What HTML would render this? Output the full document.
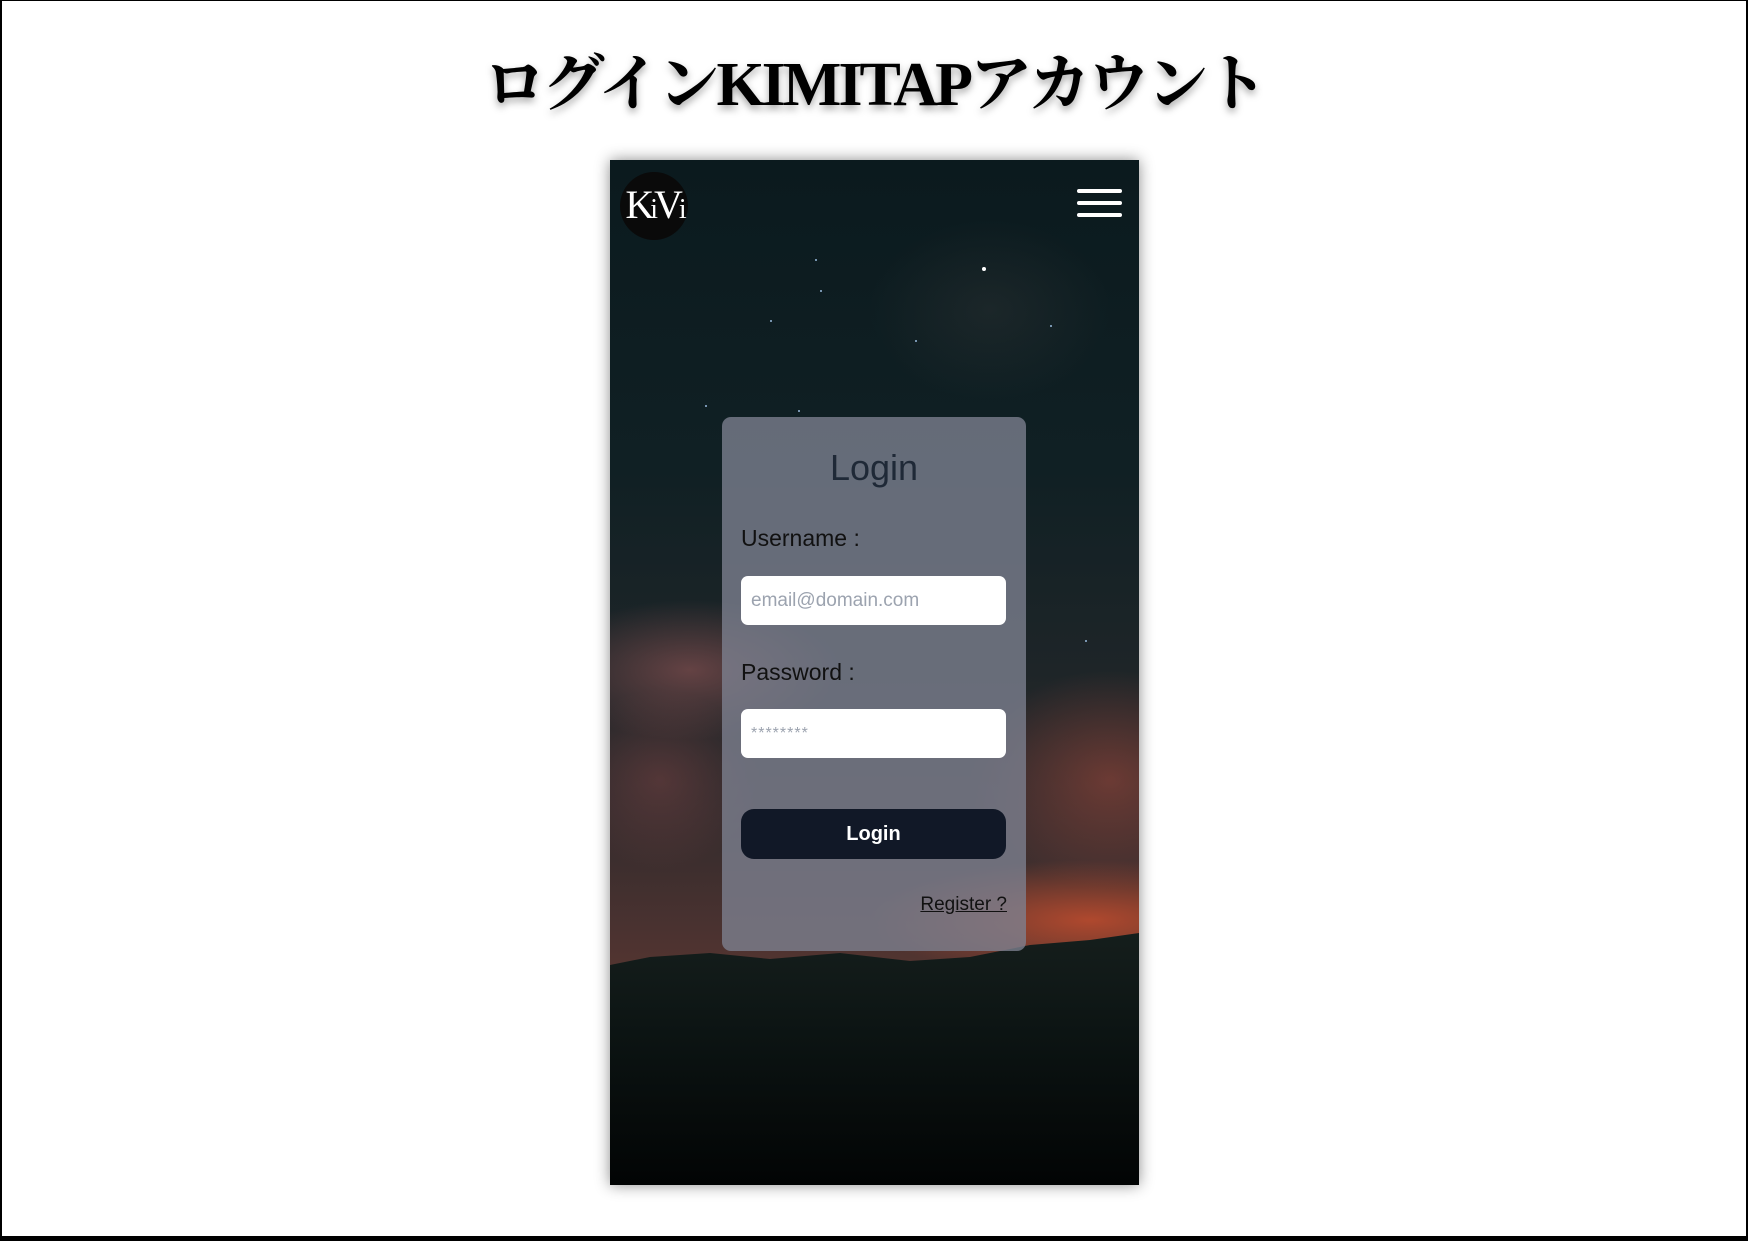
<!DOCTYPE html>
<html><head><meta charset="utf-8"><style>
html,body{margin:0;padding:0;}
body{width:1748px;height:1240px;position:relative;overflow:hidden;background:#fff;font-family:"Liberation Sans",sans-serif;}
.frame{position:absolute;left:0;top:0;width:1744px;height:1235px;border-left:2px solid #000;border-top:1px solid #000;border-right:2px solid #000;border-bottom:5px solid #000;box-sizing:content-box;}
h1{position:absolute;left:0;width:1748px;top:40px;margin:0;text-align:center;font-family:"Liberation Serif","Noto Serif CJK SC",serif;font-weight:bold;font-size:62px;line-height:90px;color:#000;text-shadow:0 4px 8px rgba(0,0,0,.35);letter-spacing:-3px;}
.phone{position:absolute;left:610px;top:160px;width:529px;height:1025px;overflow:hidden;box-shadow:0 0 14px rgba(0,0,0,.45);
background:
radial-gradient(ellipse 150px 70px at 80px 510px,rgba(170,95,95,.5),transparent),
radial-gradient(ellipse 140px 110px at 500px 620px,rgba(170,75,60,.5),transparent),
radial-gradient(ellipse 220px 60px at 480px 760px,rgba(210,80,45,.75),transparent),
radial-gradient(ellipse 100px 90px at 50px 620px,rgba(130,70,70,.45),transparent),
radial-gradient(ellipse 120px 90px at 380px 150px,rgba(60,60,60,.3),transparent),
linear-gradient(#0b1a1e 0%,#102024 30%,#1e2528 50%,#2f2a2c 62%,#4a3230 75%,#5a3630 82%,#0f1614 84%,#0a100f 90%,#030606 100%);}
.mtn{position:absolute;left:0;top:735px;width:529px;height:290px;}
.logo{position:absolute;left:10px;top:12px;width:68px;height:68px;border-radius:50%;background:#0a0a0a;color:#fff;font-family:"Liberation Serif",serif;font-size:40px;line-height:66px;text-align:center;letter-spacing:-4px;}
.logo span{font-size:28px;}
.ham{position:absolute;left:467px;top:29px;width:45px;}
.ham i{display:block;height:4px;background:#fff;border-radius:2px;margin-bottom:8px;}
.card{position:absolute;left:112px;top:257px;width:304px;height:534px;border-radius:9px;background:rgba(125,130,145,.78);}
.card .t{position:absolute;left:0;width:304px;top:30px;text-align:center;font-size:36px;color:#1f2937;}
.lbl{position:absolute;left:19px;font-size:23px;color:#111;}
.inp{position:absolute;left:19px;width:265px;height:49px;background:#fff;border-radius:7px;font-size:19px;color:#9ca3af;line-height:49px;box-sizing:border-box;padding-left:10px;}
.btn{position:absolute;left:19px;width:265px;height:50px;background:#111827;border-radius:13px;color:#fff;font-weight:bold;font-size:20px;line-height:50px;text-align:center;}
.reg{position:absolute;right:19px;font-size:19px;color:#111;text-decoration:underline;}
.star{position:absolute;width:2px;height:2px;background:#9bd;border-radius:50%;}
</style></head><body>
<div class="frame"></div>
<h1>ログインKIMITAPアカウント</h1>
<div class="phone">
<svg class="mtn" viewBox="0 0 529 290"><defs><linearGradient id="g" x1="0" y1="0" x2="0" y2="1"><stop offset="0" stop-color="#151e1c"/><stop offset=".4" stop-color="#0c1413"/><stop offset="1" stop-color="#020404"/></linearGradient></defs><path d="M0 70 L40 62 L100 58 L160 64 L230 58 L300 66 L360 62 L420 50 L480 45 L529 38 L529 290 L0 290Z" fill="url(#g)"/></svg>
<span class="star" style="left:372px;top:107px;width:4px;height:4px;background:#fff"></span>
<span class="star" style="left:205px;top:99px"></span><span class="star" style="left:210px;top:130px"></span>
<span class="star" style="left:188px;top:250px"></span><span class="star" style="left:160px;top:160px"></span>
<span class="star" style="left:305px;top:180px"></span><span class="star" style="left:440px;top:165px"></span>
<span class="star" style="left:475px;top:480px"></span><span class="star" style="left:95px;top:245px"></span>
<div class="logo">K<span>i</span>V<span>i</span></div>
<div class="ham"><i></i><i></i><i></i></div>
<div class="card">
<div class="t">Login</div>
<div class="lbl" style="top:108px">Username :</div>
<div class="inp" style="top:159px">email@domain.com</div>
<div class="lbl" style="top:242px">Password :</div>
<div class="inp" style="top:292px;font-size:16px;letter-spacing:1px">********</div>
<div class="btn" style="top:392px">Login</div>
<div class="reg" style="top:477px">Register ?</div>
</div>
</div>
</body></html>
